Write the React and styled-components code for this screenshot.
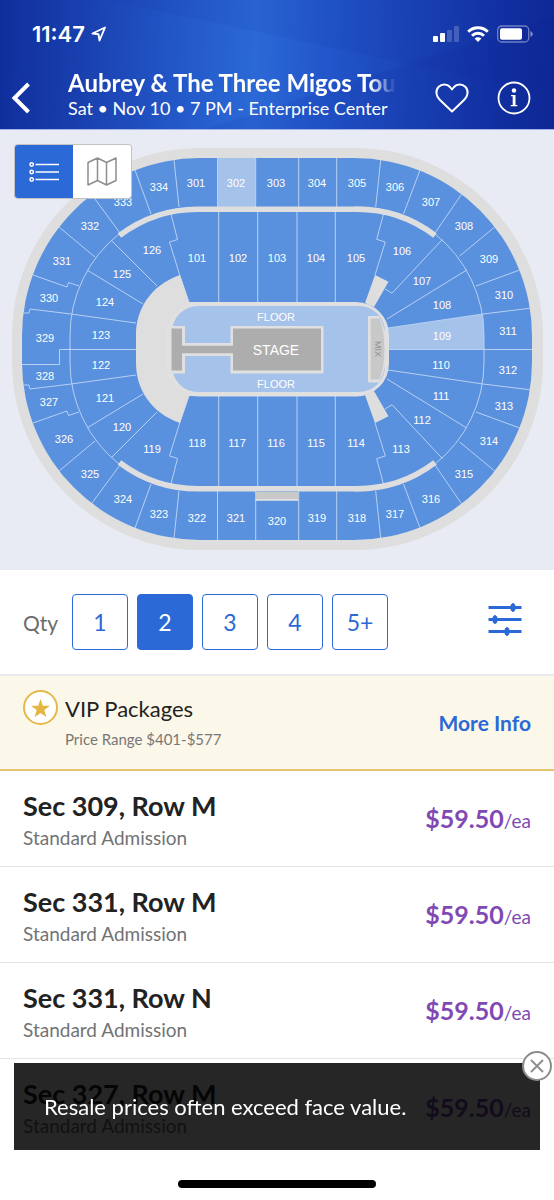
import React, { useState } from "react";
import styled, { createGlobalStyle, css } from "styled-components";

const font = `Lato, "Open Sans", sans-serif`;

const GlobalStyle = createGlobalStyle`
  *, *::before, *::after { box-sizing: border-box; }
  body { margin: 0; background: #fff; font-family: ${font}; color: #222; }
  button { font: inherit; color: inherit; margin: 0; padding: 0; border: 0; background: none; cursor: pointer; }
  h1, h2, p, ul { margin: 0; padding: 0; }
  ul { list-style: none; }
  svg { display: block; }
`;

const Page = styled.div`
  position: relative;
  min-height: 100vh;
  overflow: hidden;
`;

const Header = styled.header`
  color: #fff;
  border-bottom: 1px solid #a3b3ea;
  background:
    linear-gradient(192deg, rgba(10, 30, 150, 0.08) 38%, rgba(10, 30, 150, 0) 39%),
    linear-gradient(-18deg, rgba(8, 24, 140, 0.1) 36%, rgba(8, 24, 140, 0) 37%),
    linear-gradient(92deg, #0f2e9c 0%, #1a41b0 16%, #2357c8 32%, #2b69d6 46%, #2257cb 58%, #1a44b6 74%, #1231a2 90%, #0f2995 100%);
`;

const StatusBar = styled.div`
  display: flex;
  align-items: center;
  justify-content: space-between;
  height: 66px;
  padding: 2px 21px 0 32px;
`;

const Clock = styled.div`
  display: flex;
  align-items: center;
  gap: 6px;
  font: 600 22px/24px Inter, sans-serif;
`;

const StatusIcons = styled.div`
  display: flex;
  align-items: center;
  gap: 8px;
`;

const NavBar = styled.div`
  display: flex;
  align-items: center;
  height: 63px;
  padding: 0 23px 0 11px;
`;

const IconButton = styled.button`
  display: flex;
  flex: none;
  margin-left: ${(p) => p.$gap || 0}px;
`;

const EventInfo = styled.div`
  flex: 1;
  min-width: 0;
  margin-left: 37px;
  padding-bottom: 8px;
  white-space: nowrap;
  overflow: hidden;
`;

const EventTitle = styled.h1`
  font-size: 24px;
  line-height: 28px;
  font-weight: 700;
  overflow: hidden;
  mask-image: linear-gradient(90deg, #000 92%, transparent 100%);
`;

const EventMeta = styled.p`
  font-size: 18px;
  line-height: 22px;
`;

const MapArea = styled.section`
  position: relative;
  background: #e8ebf3;
  & > svg { width: 100%; height: auto; }
`;

const ViewToggle = styled.div`
  position: absolute;
  top: 15px;
  left: 15px;
  display: flex;
  border-radius: 3px;
  overflow: hidden;
  box-shadow: 0 0 0 1px #c2c2c4;
`;

const ToggleButton = styled.button`
  display: grid;
  place-items: center;
  width: 58px;
  height: 53px;
  background: ${(p) => (p.$active ? "#2b69d6" : "#fff")};
`;

const QtyBar = styled.section`
  display: flex;
  align-items: center;
  padding: 24px 32px 24px 23px;
  border-bottom: 2px solid #e9ebef;
`;

const QtyLabel = styled.span`
  width: 49px;
  font-size: 21px;
  color: #6b6b6b;
`;

const QtyGroup = styled.div`
  display: flex;
  flex: 1;
  gap: 9px;
`;

const QtyButton = styled.button`
  width: 56px;
  height: 56px;
  border: 1px solid #2b69d6;
  border-radius: 4px;
  font-size: 23px;
  color: ${(p) => (p.$active ? "#fff" : "#2b69d6")};
  background: ${(p) => (p.$active ? "#2b69d6" : "#fff")};
`;

const VipBanner = styled.section`
  display: flex;
  align-items: center;
  height: 95px;
  padding: 0 23px;
  gap: 7px;
  background: #fcf8e9;
  border-bottom: 2px solid #e6c673;
`;

const VipBadge = styled.div`
  align-self: flex-start;
  display: grid;
  place-items: center;
  width: 35px;
  height: 35px;
  margin-top: 14px;
  border: 2px solid #e3b94b;
  border-radius: 50%;
  background: #fff;
`;

const VipText = styled.div`
  flex: 1;
`;

const VipTitle = styled.h2`
  font-size: 22px;
  line-height: 32px;
  font-weight: 400;
`;

const VipRange = styled.p`
  font-size: 15px;
  line-height: 28px;
  color: #777;
`;

const MoreInfo = styled.a`
  font-size: 21px;
  font-weight: 700;
  color: #2b69d6;
  text-decoration: none;
`;

const Ticket = styled.li`
  display: flex;
  align-items: center;
  justify-content: space-between;
  height: 96px;
  padding: 2px 23px 0;
  border-bottom: 1px solid #e3e3e3;
  &:last-child { border-bottom: 0; }
`;

const TicketSeat = styled.h2`
  font-size: 27px;
  line-height: 36px;
  font-weight: 700;
`;

const TicketType = styled.p`
  font-size: 19px;
  line-height: 28px;
  color: #737373;
`;

const Price = styled.p`
  font-size: 19px;
  line-height: 32px;
  color: #8049b3;
  strong { font-size: 25px; font-weight: 700; }
`;

const Toast = styled.div`
  position: fixed;
  left: 14px;
  right: 14px;
  bottom: 50px;
  display: flex;
  align-items: center;
  height: 87px;
  padding: 0 30px;
  font-size: 22px;
  color: #fff;
  background: rgba(0, 0, 0, 0.85);
`;

const ToastClose = styled.button`
  position: absolute;
  top: -12px;
  right: -12px;
  display: grid;
  place-items: center;
  width: 30px;
  height: 30px;
  border: 2px solid #8c8c8c;
  border-radius: 50%;
  background: #fff;
`;

const HomeIndicator = styled.div`
  position: fixed;
  left: 50%;
  bottom: 12px;
  width: 198px;
  height: 8px;
  margin-left: -99px;
  border-radius: 4px;
  background: #000;
`;

const mapText = css`
  font-family: "Liberation Sans", sans-serif;
  text-anchor: middle;
  fill: #fff;
`;
const SectionLabel = styled.text`
  ${mapText}
  font-size: 11px;
`;
const StageLabel = styled.text`
  ${mapText}
  font-size: 14px;
`;
const MixLabel = styled.text`
  ${mapText}
  font-size: 9px;
  fill: #929292;
`;

const sections = [
  [301, 196, 53], [302, 236, 53], [303, 276, 53], [304, 317, 53], [305, 357, 53], [306, 395, 57],
  [307, 431, 72], [308, 464, 96], [309, 489, 129], [310, 504, 165], [311, 508, 201], [312, 508, 240],
  [313, 504, 276], [314, 489, 311], [315, 464, 344], [316, 431, 369], [317, 395, 384], [318, 357, 388],
  [319, 317, 388], [320, 277, 391], [321, 236, 388], [322, 197, 388], [323, 159, 384], [324, 123, 369],
  [325, 90, 344], [326, 64, 309], [327, 49, 272], [328, 45, 246], [329, 45, 208], [330, 49, 168],
  [331, 62, 131], [332, 90, 96], [333, 123, 72], [334, 159, 57],
  [101, 197, 128], [102, 238, 128], [103, 277, 128], [104, 316, 128], [105, 356, 128], [106, 402, 121],
  [107, 422, 151], [108, 442, 175], [109, 442, 206], [110, 441, 235], [111, 441, 266], [112, 422, 290],
  [113, 401, 319], [114, 356, 313], [115, 316, 313], [116, 276, 313], [117, 237, 313], [118, 197, 313],
  [119, 152, 319], [120, 122, 297], [121, 105, 268], [122, 101, 235], [123, 101, 205], [124, 105, 172],
  [125, 122, 144], [126, 152, 120],
];

const halfBowlLines = [
  "M174 30L179 77", "M135 40L151 84", "M92 65L120 103", "M59 97L95 127",
  "M33 145L67 157L68.500 152.500L79 156", "M24 183L29 183L30 179L71 184L136 193",
  "M111 110L157 156", "M87 140L143 174", "M171 84L177.500 109.500L169.500 112L180 146L189 172",
  "M217.500 28V77", "M255.700 28V77", "M298.700 28V77", "M336.700 28V77",
  "M218.700 82V173", "M257.700 82V173", "M297 82V173", "M335.300 82V173",
  "M380.700 30L375.700 77", "M419.700 41L403.500 84", "M462 63.500L435 103", "M494.700 97L459.700 126",
  "M519.700 140L476 156", "M529.500 178.300L483 184L388 198", "M466.700 140L387 189",
  "M442.300 109.500L392 163.300L385 159", "M383.500 84L376.700 109.300L385.300 112L375 145",
  "M70 220V206A130 130 0 0 1 119 104", "M484 220V206A130 130 0 0 0 435 104",
].join("");

function HalfBowl() {
  return (
    <>
      <path d={halfBowlLines} fill="none" stroke="#b7d0f4" strokeWidth="1" />
      <path d="M119.500 105.500A130 130 0 0 1 200 79.200H354A130 130 0 0 1 435 105.500" fill="none" stroke="#dedede" strokeWidth="5.600" />
      <path d="M180 145C151 155 136 179 136 205V220H200V172H189Z" fill="#dedede" />
      <path d="M375 145L388.500 151.700L374 177L365 173Z" fill="#dedede" />
    </>
  );
}

function SeatMap() {
  return (
    <svg viewBox="0 0 554 440" role="img" aria-label="Seat map">
      <rect x="12" y="18" width="531" height="402" rx="188" fill="#dedede" />
      <rect x="22" y="28" width="510" height="382" rx="178" fill="#5a91de" />
      <path d="M217.500 28H255.700V77H217.500Z" fill="#a5c2ea" />
      <path d="M388 198L483 184Q484 194 484 206V219.500H389Z" fill="#a5c2ea" />
      <HalfBowl />
      <g transform="matrix(1 0 0 -1 0 438)">
        <HalfBowl />
      </g>
      <path d="M389 219.500H532M136 219.500H59.500V234.500H22" fill="none" stroke="#b7d0f4" />
      <path d="M255.500 362H298.500V370H255.500Z" fill="#c9c9c9" />
      <path d="M255.500 370H298.500" stroke="#e6e6e6" strokeWidth="1.500" />
      <rect x="166" y="172" width="223" height="94.500" rx="33" fill="#e0e0e0" />
      <rect x="172" y="176" width="213" height="86" rx="26" fill="#a5c2ea" />
      <path d="M171.500 196H185V213H230.500V196H323.500V243.500H230.500V226H185V243.500H171.500Z" fill="#e0e0e0" />
      <path d="M171.500 198.500H182V215.700H233V198.500H321V240.500H233V223.300H182V240.500H171.500Z" fill="#adadad" />
      <path d="M368 186H379Q387 200 387 219Q387 238 379 252.500H368Z" fill="#e0e0e0" />
      <path d="M370.700 188.500H379.500Q384.500 201 384.500 219Q384.500 237 379.500 249.500H370.700Z" fill="#c8c8c8" />
      <MixLabel transform="translate(375 219) rotate(90)">MIX</MixLabel>
      <StageLabel x="276" y="225">STAGE</StageLabel>
      <SectionLabel x="276" y="191">FLOOR</SectionLabel>
      <SectionLabel x="276" y="258">FLOOR</SectionLabel>
      {sections.map(([id, x, y]) => (
        <SectionLabel key={id} x={x} y={y + 4}>{id}</SectionLabel>
      ))}
    </svg>
  );
}

const tickets = ["Sec 309, Row M", "Sec 331, Row M", "Sec 331, Row N", "Sec 327, Row M"];

export default function App() {
  const [qty, setQty] = useState("2");
  const [view, setView] = useState("list");
  const [toast, setToast] = useState(true);

  return (
    <Page>
      <GlobalStyle />
      <Header>
        <StatusBar>
          <Clock>
            11:47
            <svg width="16" height="16" viewBox="0 0 16 16" fill="none" stroke="#fff" strokeWidth="1.900" strokeLinejoin="round">
              <path d="M14 1.500L1.500 7.500L7.500 8.300L8.500 14.500Z" />
            </svg>
          </Clock>
          <StatusIcons>
            <svg width="26" height="16" viewBox="0 0 26 16" fill="#fff">
              <rect x="0" y="10" width="5" height="6" rx="1" />
              <rect x="7" y="7" width="5" height="9" rx="1" />
              <rect x="14" y="4" width="5" height="12" rx="1" opacity=".2" />
              <rect x="21" y="0" width="5" height="16" rx="1" opacity=".2" />
            </svg>
            <svg width="22" height="16" viewBox="0 0 22 16" fill="none" stroke="#fff" strokeWidth="3">
              <path d="M1.200 5.800A14 14 0 0 1 20.800 5.800" />
              <path d="M5 9.800A8.600 8.600 0 0 1 17 9.800" />
              <path d="M11 16L7.600 12.600A4.800 4.800 0 0 1 14.400 12.600Z" fill="#fff" stroke="none" />
            </svg>
            <svg width="36" height="18" viewBox="0 0 36 18">
              <rect x="0.700" y="1" width="31" height="16" rx="4" fill="none" stroke="#fff" strokeOpacity=".4" strokeWidth="1.300" />
              <rect x="3" y="3.300" width="22" height="11.400" rx="2" fill="#fff" />
              <path d="M33.500 6Q35.800 7.500 35.800 9T33.500 12Z" fill="#fff" opacity=".5" />
            </svg>
          </StatusIcons>
        </StatusBar>
        <NavBar>
          <IconButton aria-label="Back">
            <svg width="20" height="32" viewBox="0 0 20 32" fill="none" stroke="#fff" strokeWidth="4">
              <path d="M17.500 2L3.500 16L17.500 30" />
            </svg>
          </IconButton>
          <EventInfo>
            <EventTitle>Aubrey &amp; The Three Migos Tour</EventTitle>
            <EventMeta>Sat • Nov 10 • 7 PM - Enterprise Center</EventMeta>
          </EventInfo>
          <IconButton aria-label="Add to favorites" $gap={39}>
            <svg width="34" height="30" viewBox="0 0 34 30" fill="none" stroke="#fff" strokeWidth="2" strokeLinejoin="round">
              <path d="M17 28.500L4.500 16.500C1 13 0.200 7.500 3.500 4C6.800 0.600 12.200 0.800 15 4L17 6.500L19 4C21.800 0.800 27.200 0.600 30.500 4C33.800 7.500 33 13 29.500 16.500Z" />
            </svg>
          </IconButton>
          <IconButton aria-label="Event information" $gap={28}>
            <svg width="34" height="34" viewBox="0 0 34 34" fill="none" stroke="#fff" strokeWidth="1.800">
              <circle cx="17" cy="17" r="15.500" />
              <circle cx="17" cy="9.500" r="2.200" fill="#fff" stroke="none" />
              <path d="M14 14H18.500V24H20.300V25.300H13.800V24H15.700V15.300H14Z" fill="#fff" stroke="none" />
            </svg>
          </IconButton>
        </NavBar>
      </Header>

      <MapArea>
        <SeatMap />
        <ViewToggle>
          <ToggleButton aria-label="List view" $active={view === "list"} onClick={() => setView("list")}>
            <svg width="30" height="22" viewBox="0 0 30 22" fill="none" stroke="#fff" strokeWidth="1.500">
              {[3.5, 11, 18.5].map((y) => (
                <g key={y}>
                  <circle cx="2.700" cy={y} r="1.700" />
                  <path d={`M6.500 ${y}H30`} />
                </g>
              ))}
            </svg>
          </ToggleButton>
          <ToggleButton aria-label="Map view" $active={view === "map"} onClick={() => setView("map")}>
            <svg width="30" height="29" viewBox="0 0 30 29" fill="none" stroke="#8e8e8e" strokeWidth="1.500" strokeLinejoin="round">
              <path d="M1 5.500L10.500 1L19.500 5.500L29 1V23.500L19.500 28L10.500 23.500L1 28ZM10.500 1V23.500M19.500 5.500V28" />
            </svg>
          </ToggleButton>
        </ViewToggle>
      </MapArea>

      <QtyBar>
        <QtyLabel id="qty-label">Qty</QtyLabel>
        <QtyGroup role="group" aria-labelledby="qty-label">
          {["1", "2", "3", "4", "5+"].map((q) => (
            <QtyButton key={q} $active={q === qty} aria-pressed={q === qty} onClick={() => setQty(q)}>{q}</QtyButton>
          ))}
        </QtyGroup>
        <IconButton aria-label="Filters">
          <svg width="34" height="38" viewBox="0 0 34 38" stroke="#2b69d6" fill="#2b69d6">
            <path d="M0.500 4.500H33.500M0.500 16.500H33.500M0.500 28.500H33.500" strokeWidth="2.800" />
            <ellipse cx="25" cy="4.500" rx="2.200" ry="4" />
            <ellipse cx="7" cy="16.500" rx="2.200" ry="4" />
            <ellipse cx="19" cy="28.500" rx="2.200" ry="4" />
          </svg>
        </IconButton>
      </QtyBar>

      <VipBanner>
        <VipBadge>
          <svg width="19" height="18" viewBox="0 0 19 18" fill="#e3b543">
            <path d="M9.500 0L11.800 6.700L19 6.800L13.300 11.100L15.400 18L9.500 13.900L3.600 18L5.700 11.100L0 6.800L7.200 6.700Z" />
          </svg>
        </VipBadge>
        <VipText>
          <VipTitle>VIP Packages</VipTitle>
          <VipRange>Price Range $401-$577</VipRange>
        </VipText>
        <MoreInfo href="#vip">More Info</MoreInfo>
      </VipBanner>

      <ul>
        {tickets.map((seat) => (
          <Ticket key={seat}>
            <div>
              <TicketSeat>{seat}</TicketSeat>
              <TicketType>Standard Admission</TicketType>
            </div>
            <Price><strong>$59.50</strong>/ea</Price>
          </Ticket>
        ))}
      </ul>

      {toast && (
        <Toast role="status">
          Resale prices often exceed face value.
          <ToastClose aria-label="Dismiss" onClick={() => setToast(false)}>
            <svg width="14" height="14" viewBox="0 0 14 14" stroke="#8c8c8c" strokeWidth="1.800">
              <path d="M1 1L13 13M13 1L1 13" />
            </svg>
          </ToastClose>
        </Toast>
      )}
      <HomeIndicator />
    </Page>
  );
}
